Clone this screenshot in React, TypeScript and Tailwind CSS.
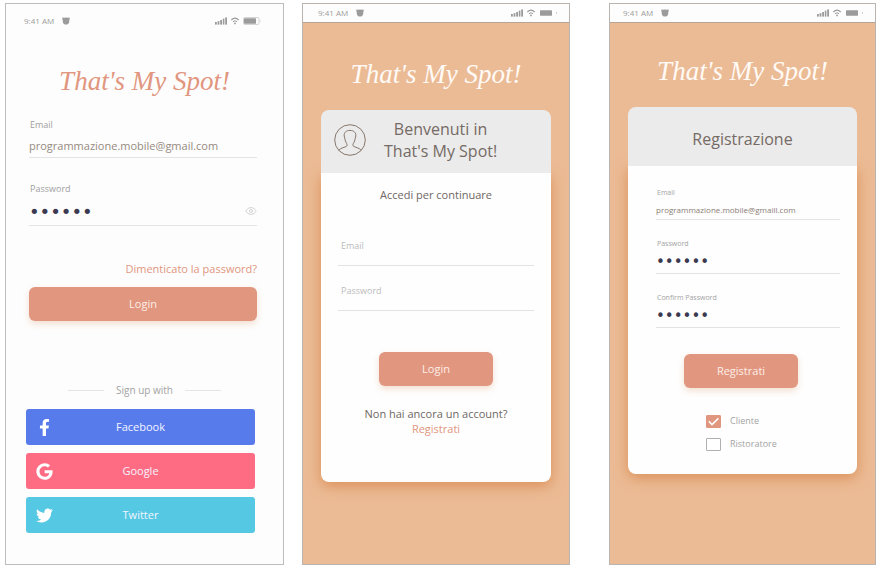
import { useState } from "react";
import type { ReactNode } from "react";
import { Eye } from "lucide-react";
import { FaFacebookF, FaGoogle, FaTwitter } from "react-icons/fa";

function StatusBar({ className, outlined = false }: { className: string; outlined?: boolean }) {
  return (
    <div className={`flex items-center justify-between bg-[#fdfdfd] text-[#9b9b9b] ${className}`}>
      <div className="flex items-center gap-2">
        <span className="text-[8px] leading-3">9:41 AM</span>
        <svg className="h-2 w-2" viewBox="0 0 8 8" fill="currentColor" aria-hidden="true">
          <path d="M0.4 0.4 L2.4 0.8 Q4 0.3 5.6 0.8 L7.6 0.4 L7.7 2.4 L7.2 3 Q7.6 5.6 6.1 6.9 Q4 8.2 1.9 6.9 Q0.4 5.6 0.8 3 L0.3 2.4 Z" />
        </svg>
      </div>
      <div className="flex items-center gap-1">
        <svg className="h-2 w-3" viewBox="0 0 12 8" fill="currentColor" aria-hidden="true">
          <rect x="0" y="5" width="1.8" height="2.6" />
          <rect x="2.6" y="4.2" width="1.8" height="3.4" />
          <rect x="5.2" y="3" width="1.8" height="4.6" />
          <rect x="7.8" y="1.6" width="1.6" height="6" />
          <rect x="10.2" y="0.4" width="1.8" height="7.2" />
        </svg>
        <svg className="h-2 w-2" viewBox="0 0 8 8" fill="none" stroke="currentColor" aria-hidden="true">
          <path d="M0.3 3 Q4 -0.6 7.7 3" strokeWidth="1.1" />
          <path d="M1.9 4.7 Q4 2.8 6.1 4.7" strokeWidth="1" />
          <circle cx="4" cy="6.4" r="0.9" fill="currentColor" stroke="none" />
        </svg>
        <svg className="h-2 w-[18px]" viewBox="0 0 18 8" aria-hidden="true">
          {outlined && (
            <>
              <rect x="0.5" y="0.5" width="15.5" height="7" rx="1.2" fill="none" stroke="#c9c9c9" strokeWidth="0.8" />
              <path d="M17 2.8 Q18 4 17 5.2 Z" fill="#bbbbbb" />
            </>
          )}
          <rect x="1" y="1.3" width="12" height="5.4" rx="0.4" fill="#9b9b9b" />
          {!outlined && <rect x="17" y="3.5" width="1" height="1" fill="#aaaaaa" />}
        </svg>
      </div>
    </div>
  );
}

function Brand({ className }: { className: string }) {
  return (
    <h1 className={`text-center font-['Liberation_Serif',serif] text-[27px] leading-10 italic ${className}`}>
      That's My Spot!
    </h1>
  );
}

function PrimaryButton({ className, children }: { className: string; children: ReactNode }) {
  return (
    <button
      type="submit"
      className={`h-[34px] rounded-md bg-[#e1967f] text-[11px] text-[#fdeee8] shadow-[0_3px_6px_rgba(226,170,130,0.35)] ${className}`}
    >
      {children}
    </button>
  );
}

function LoginScreen() {
  const [visible, setVisible] = useState(false);
  return (
    <section className="border border-[#bdbdbd] bg-[#fdfdfd] pb-[31px]">
      <StatusBar className="h-[34px] pr-[22px] pl-[18px]" outlined />
      <Brand className="mt-[23px] text-[#e1967f]" />
      <form className="mt-4 flex flex-col pr-[26px] pl-[23px]" onSubmit={(e) => e.preventDefault()}>
        <label htmlFor="login-email" className="pl-px text-[9px] leading-4 text-[#9f9f9f]">
          Email
        </label>
        <input
          id="login-email"
          type="email"
          defaultValue="programmazione.mobile@gmail.com"
          className="h-[25px] w-full border-b border-[#e4e4e4] bg-transparent text-[11px] text-[#958a80] outline-none"
        />
        <label htmlFor="login-password" className="mt-[23px] pl-px text-[9px] leading-4 text-[#9f9f9f]">
          Password
        </label>
        <div className="flex h-[29px] items-center border-b border-[#e4e4e4]">
          <input
            id="login-password"
            type={visible ? "text" : "password"}
            defaultValue="secret"
            className="h-6 min-w-0 flex-1 bg-transparent font-['DejaVu_Sans',sans-serif] text-[18px] text-[#3c3a50] outline-none"
          />
          <button type="button" aria-label="Mostra password" onClick={() => setVisible(!visible)}>
            <Eye className="h-3 w-3 text-[#d4d4d4]" strokeWidth={2} />
          </button>
        </div>
        <a href="#recupero" className="mt-[33px] self-end text-[11px] leading-5 text-[#e1967f]">
          Dimenticato la password?
        </a>
        <PrimaryButton className="mt-2 w-full">Login</PrimaryButton>
      </form>
      <div className="mt-[61px] flex items-center justify-center gap-3 text-[10px] leading-4 text-[#a3a3a3]">
        <span className="h-px w-9 bg-[#e4e4e4]" />
        Sign up with
        <span className="h-px w-9 bg-[#e4e4e4]" />
      </div>
      <div className="mt-[11px] flex flex-col gap-2 pr-7 pl-5 text-[11px] text-[#f2f5ff]">
        <button type="button" className="grid h-9 grid-cols-[36px_1fr_36px] items-center rounded-[3px] bg-[#587bec]">
          <FaFacebookF className="h-[17px] w-[17px] justify-self-center text-white" />
          Facebook
        </button>
        <button type="button" className="grid h-9 grid-cols-[36px_1fr_36px] items-center rounded-[3px] bg-[#fe6c84]">
          <FaGoogle className="h-[17px] w-[17px] justify-self-center text-white" />
          Google
        </button>
        <button type="button" className="grid h-9 grid-cols-[36px_1fr_36px] items-center rounded-[3px] bg-[#55c8e3]">
          <FaTwitter className="h-[17px] w-[17px] justify-self-center text-white" />
          Twitter
        </button>
      </div>
    </section>
  );
}

function Card({ header, children }: { header: ReactNode; children: ReactNode }) {
  return (
    <div className="mx-[18px] mt-4">
      <div className="relative z-10 rounded-t-lg bg-[#ebebeb] text-base text-[#756a64]">{header}</div>
      <div className="rounded-b-lg bg-[#fefefe] shadow-[0_4px_14px_rgba(214,130,68,0.75)]">{children}</div>
    </div>
  );
}

function WelcomeScreen() {
  return (
    <section className="ml-[18px] border border-[#b9b4b0] bg-[#ebbb95]">
      <StatusBar className="h-[19px] border-b border-[#b5a497] pr-3 pl-[15px]" />
      <Brand className="mt-[31px] text-[#fffaf5]" />
      <Card
        header={
          <div className="flex h-[63px] items-center gap-[18px] pb-1 pl-[13px]">
            <svg className="h-8 w-8" viewBox="0 0 32 32" fill="none" stroke="#85776d" strokeWidth="1" aria-hidden="true">
              <circle cx="16" cy="16" r="15.3" />
              <path d="M4.8 26.3 C6.5 24.2 9.5 23.6 12 22.6 C13.2 22 13.4 20.6 12.6 19.4 C11.6 17.8 11 16.4 10.8 14.4 L10.2 12 C9.8 8.6 12.2 6.4 16 6.4 C19.8 6.4 22.2 8.6 21.8 12 L21.2 14.4 C21 16.4 20.4 17.8 19.4 19.4 C18.6 20.6 18.8 22 20 22.6 C22.5 23.6 25.5 24.2 27.2 26.3" />
            </svg>
            <h2 className="text-center leading-[22px]">
              Benvenuti in
              <br />
              That's My Spot!
            </h2>
          </div>
        }
      >
        <form className="flex flex-col px-[17px] pt-3.5 pb-[46px]" onSubmit={(e) => e.preventDefault()}>
          <p className="text-center text-[11px] leading-4 text-[#6f6763]">Accedi per continuare</p>
          <input
            type="email"
            aria-label="Email"
            placeholder="Email"
            className="mt-[23px] h-10 w-full border-b border-[#e4e4e4] bg-transparent px-[3px] text-[9px] outline-none placeholder:text-[#bcbcbc]"
          />
          <input
            type="password"
            aria-label="Password"
            placeholder="Password"
            className="mt-[5px] h-10 w-full border-b border-[#e4e4e4] bg-transparent px-[3px] text-[9px] outline-none placeholder:text-[#bcbcbc]"
          />
          <PrimaryButton className="mt-[41px] w-[114px] self-center">Login</PrimaryButton>
          <p className="mt-5 text-center text-[11px] leading-[15px] text-[#6f6763]">
            Non hai ancora un account?
            <br />
            <a href="#registrati" className="text-[#e1967f]">
              Registrati
            </a>
          </p>
        </form>
      </Card>
    </section>
  );
}

function RegisterField({ id, label, type, value }: { id: string; label: string; type: string; value: string }) {
  return (
    <div className="flex flex-col">
      <label htmlFor={id} className="pl-px text-[7px] leading-3 text-[#a3a3a3]">
        {label}
      </label>
      <input
        id={id}
        type={type}
        defaultValue={value}
        className={`w-full border-b border-[#e4e4e4] bg-transparent outline-none ${
          type === "password"
            ? "h-6 font-['DejaVu_Sans',sans-serif] text-[15px] text-[#3c3a50]"
            : "h-[21px] text-[8px] text-[#8a7d74]"
        }`}
      />
    </div>
  );
}

function RoleOption({ label, checked = false }: { label: string; checked?: boolean }) {
  return (
    <label className="flex h-4 items-center gap-[9px]">
      <span className="relative flex">
        <input
          type="checkbox"
          defaultChecked={checked}
          className="peer h-[13px] w-[15px] appearance-none rounded-[1px] border border-[#b0b0b0] bg-white checked:border-[#e1967f] checked:bg-[#e1967f]"
        />
        <svg
          className="pointer-events-none absolute inset-0 hidden h-[13px] w-[15px] peer-checked:block"
          viewBox="0 0 15 13"
          fill="none"
          stroke="#ffffff"
          strokeWidth="1.5"
          aria-hidden="true"
        >
          <path d="M2.8 6.3 L6 9.6 L12.4 3.4" />
        </svg>
      </span>
      {label}
    </label>
  );
}

function RegisterScreen() {
  return (
    <section className="ml-[39px] border border-[#b9b4b0] bg-[#ebbb95]">
      <StatusBar className="h-[19px] border-b border-[#b5a497] pr-3 pl-[13px]" />
      <Brand className="mt-7 text-[#fffaf5]" />
      <Card header={<h2 className="flex h-[59px] items-center justify-center pt-1">Registrazione</h2>}>
        <form className="flex flex-col pt-[21px] pr-[17px] pb-[22px] pl-7" onSubmit={(e) => e.preventDefault()}>
          <div className="flex flex-col gap-[18px]">
            <RegisterField id="reg-email" label="Email" type="email" value="programmazione.mobile@gmaill.com" />
            <RegisterField id="reg-password" label="Password" type="password" value="secret" />
            <RegisterField id="reg-confirm" label="Confirm Password" type="password" value="secret" />
          </div>
          <PrimaryButton className="mt-[26px] ml-7 w-[114px]">Registrati</PrimaryButton>
          <fieldset className="mt-[25px] ml-[50px] flex flex-col gap-[7px] text-[9px] text-[#a3a3a3]">
            <RoleOption label="Cliente" checked />
            <RoleOption label="Ristoratore" />
          </fieldset>
        </form>
      </Card>
    </section>
  );
}

export default function App() {
  return (
    <main className="grid grid-cols-[minmax(0,279fr)_minmax(0,286fr)_minmax(0,306fr)] bg-white pt-[3px] pr-1.5 pb-1 pl-[5px] font-['Open_Sans','Noto_Sans',sans-serif]">
      <LoginScreen />
      <WelcomeScreen />
      <RegisterScreen />
    </main>
  );
}
